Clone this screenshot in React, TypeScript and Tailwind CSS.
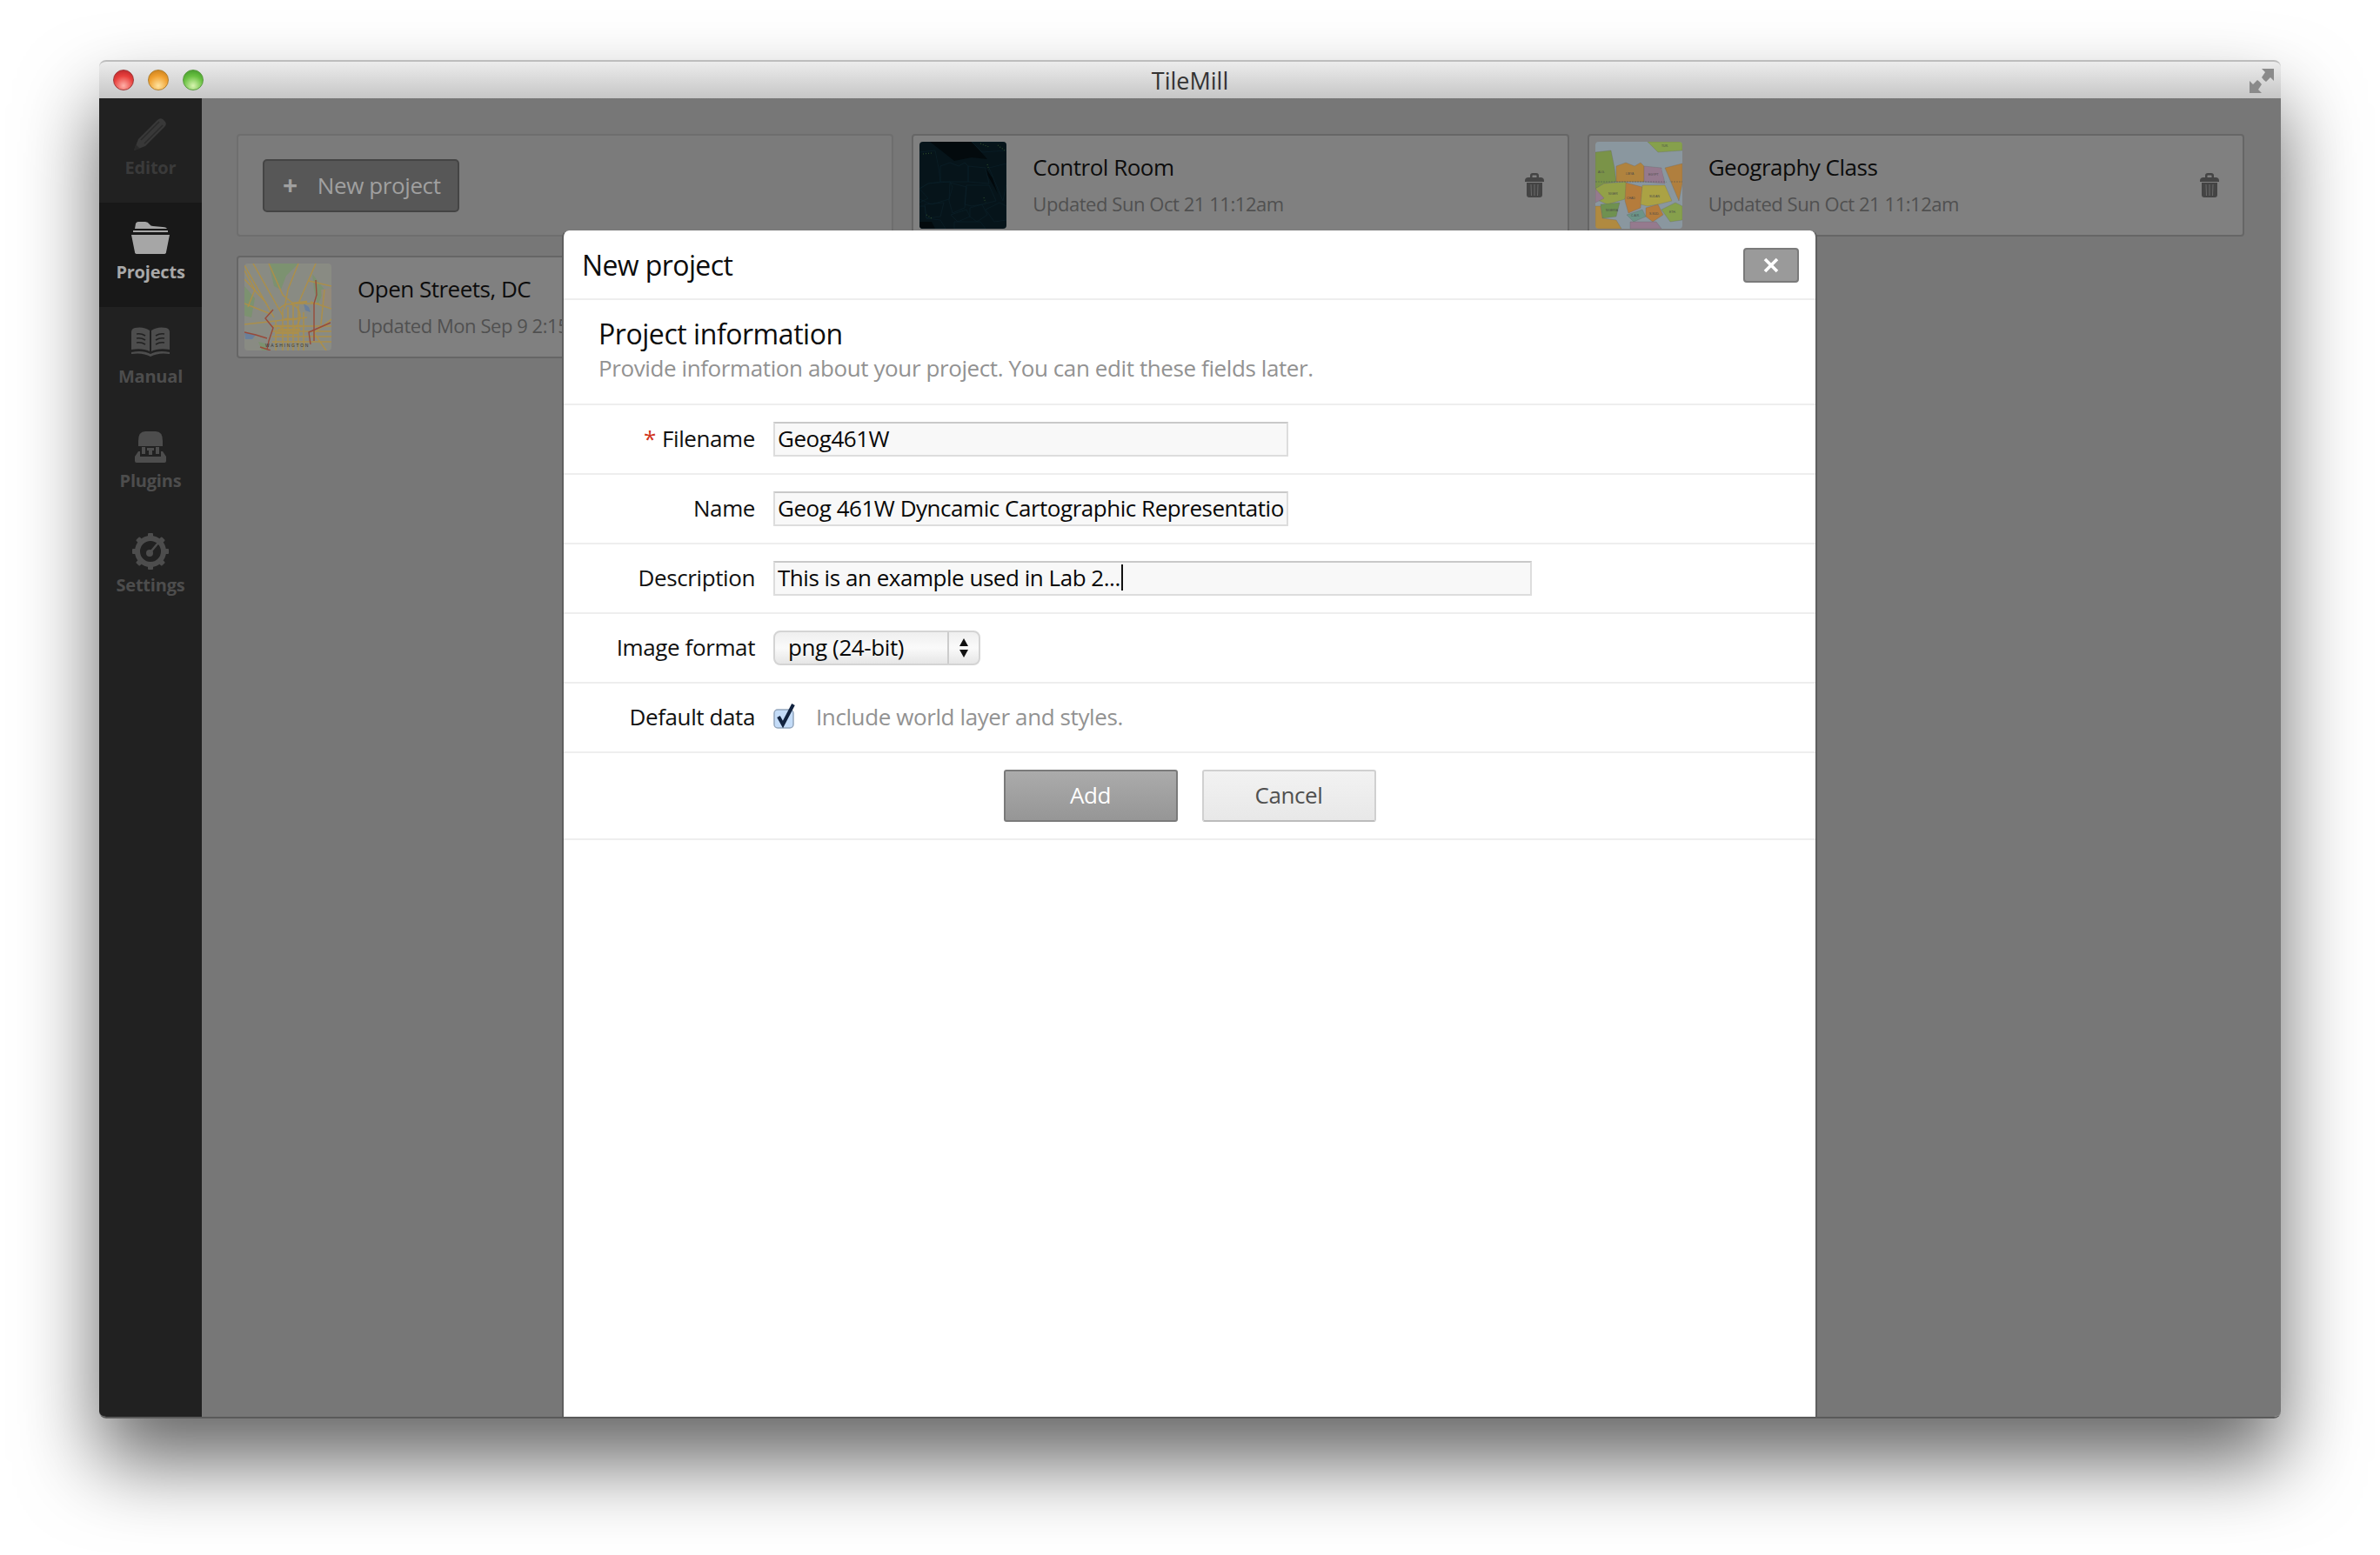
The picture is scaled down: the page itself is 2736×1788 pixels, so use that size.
const fontStack = { fontFamily: '"Open Sans", "Noto Sans", sans-serif' }

function PencilIcon() {
  return (
    <svg width="40" height="40" viewBox="0 0 40 40" fill="#383838">
      <path d="M1 39 L6 26 L28 4 Q31 1 34 3 L37 6 Q39 9 36 12 L14 34 Z" />
      <path d="M1 39 L3 32 L8 37 Z" fill="#2a2a2a" />
      <path d="M9 27 L30 6 M13 31 L34 10" stroke="#2a2a2a" strokeWidth="1.5" />
    </svg>
  )
}

function FolderIcon() {
  return (
    <svg width="44" height="40" viewBox="0 0 44 40" fill="#a6a6a6">
      <path d="M4 9 L5 3 Q6 1 8 1 L16 1 Q19 1 21 4 Q22 6 25 6 L36 7 Q40 7 41 9 Z" />
      <rect x="2" y="11" width="40" height="2" />
      <path d="M0 16 L44 16 L40 36 Q40 38 37 38 L7 38 Q4 38 4 36 Z" />
    </svg>
  )
}

function BookIcon() {
  return (
    <svg width="46" height="40" viewBox="0 0 46 40" fill="#4d4d4d">
      <path d="M1 8 Q1 4 5 3 Q15 1 22 6 L22 30 Q14 26 1 28 Z" />
      <path d="M45 8 Q45 4 41 3 Q31 1 24 6 L24 30 Q32 26 45 28 Z" />
      <path d="M1 31 Q14 28 23 33 Q32 28 45 31 L45 33 Q32 31 23 36 Q14 31 1 33 Z" />
      <path d="M7 10 Q12 9 17 12 M7 15 Q12 14 17 17 M7 20 Q12 19 17 22 M39 10 Q34 9 29 12 M39 15 Q34 14 29 17 M39 20 Q34 19 29 22" stroke="#212121" strokeWidth="1.6" fill="none" />
    </svg>
  )
}

function PluginIcon() {
  return (
    <svg width="38" height="40" viewBox="0 0 38 40" fill="#4d4d4d">
      <path d="M5 13 Q5 2 13 2 L25 2 Q33 2 33 13 L33 19 L5 19 Z" />
      <rect x="9" y="20" width="4" height="8" />
      <rect x="25" y="20" width="4" height="8" />
      <path d="M15 21 L23 21 L23 24 L21 24 L21 29 L17 29 L17 24 L15 24 Z" />
      <path d="M5 25 L7 25 L7 31 L31 31 L31 25 L33 25 L37 31 L37 36 Q37 38 35 38 L3 38 Q1 38 1 36 L1 31 Z" />
    </svg>
  )
}

function GearIcon() {
  return (
    <svg width="42" height="42" viewBox="0 0 42 42" fill="none">
      <circle cx="21" cy="21" r="15" stroke="#4d4d4d" strokeWidth="6" />
      {[0, 45, 90, 135, 180, 225, 270, 315].map((a) => (
        <rect key={a} x="18" y="0" width="6" height="6" rx="1" fill="#4d4d4d" transform={`rotate(${a} 21 21)`} />
      ))}
      <circle cx="20" cy="23" r="4" fill="#4d4d4d" />
      <path d="M20 23 L30 11" stroke="#4d4d4d" strokeWidth="2.5" />
    </svg>
  )
}

function TrashIcon() {
  return (
    <svg width="22" height="28" viewBox="0 0 22 28" fill="#444444">
      <path d="M6 5 L6 3 Q6 0 9 0 L13 0 Q16 0 16 3 L16 5 L13.5 5 L13.5 3 Q13.5 2.5 13 2.5 L9 2.5 Q8.5 2.5 8.5 3 L8.5 5 Z" />
      <path d="M0 9 Q0 5 4 5 L18 5 Q22 5 22 9 L22 10 L0 10 Z" />
      <path d="M2 11 L20 11 L20 25 Q20 28 17 28 L5 28 Q2 28 2 25 Z" />
      <path d="M7 13 L7.5 26 M11 13 L11 26 M15 13 L14.5 26" stroke="#6a6a6a" strokeWidth="1" />
    </svg>
  )
}

function ExpandIcon() {
  return (
    <svg width="28" height="28" viewBox="0 0 28 28" fill="#8a8a8a">
      <path d="M14 0 L28 0 L28 14 L24 10 L19 15 Q16 13 14 10 L18 4 Z" />
      <path d="M0 14 L4 18 L9 13 Q12 15 14 18 L10 24 L14 28 L0 28 Z" />
    </svg>
  )
}

function DcMap() {
  return (
    <svg viewBox="0 0 100 100" className="h-[100px] w-[100px] rounded-[4px]">
      <rect width="100" height="100" fill="#898b83" />
      <path d="M28 0 L62 0 L48 14 L42 30 L34 26 Z" fill="#7c9270" />
      <path d="M78 12 L92 30 L84 48 L80 30 Z" fill="#7c9270" />
      <path d="M0 26 L12 40 L8 62 L0 60 Z" fill="#7c9270" />
      <path d="M88 30 L100 28 L100 50 L90 50 Z" fill="#93897a" />
      <path d="M0 79 L13 82 L9 87 L1 87 Z" fill="#6a7f9a" />
      <path d="M16 90 L24 92 L26 100 L20 100 Z" fill="#7c9270" />
      <path d="M68 46 L74 50 L76 56 L70 54 Z" fill="#6a7f9a" />
      <g stroke="#ab8f4b" strokeWidth="1.5" fill="none">
        <path d="M0 2 L34 62 M10 0 L44 60 M0 18 L24 44 L34 62 M28 0 L44 36 L56 46 L86 46" />
        <path d="M62 0 L50 30 L46 52 M82 0 L62 46 M74 20 L100 26 M76 44 L100 52 M0 46 L30 58" />
        <path d="M0 70 L36 66 L72 62 M36 66 L36 100 M44 52 L44 100 M50 50 L50 100 M56 48 L56 100 M62 48 L62 100 M68 56 L68 100" />
        <path d="M32 72 L100 72 M32 78 L100 78 M32 84 L100 84 M32 90 L100 90 M100 64 L80 80 M80 80 L94 100" />
        <path d="M0 8 L12 30 L4 50 M92 30 L88 70 M40 52 Q50 42 60 50 Q68 60 60 72 Q50 82 40 72" />
      </g>
      <g stroke="#ab8f4b" strokeWidth="2.6" fill="none">
        <path d="M34 72 L66 72 M36 80 L62 80 M38 76 L64 76 M46 64 L60 64 M54 46 L72 44" />
      </g>
      <g stroke="#984a3a" strokeWidth="1.4" fill="none">
        <path d="M82 19 L83 36 L80 46 L80 89" />
        <path d="M99 68 L74 79 L76 93" />
        <path d="M33 53 L24 63 L33 74 L28 89 L26 99" />
        <path d="M0 79 L13 82 L26 86 M18 96 L30 100" />
      </g>
      <text x="24" y="96" fontSize="5" letterSpacing="1.7" fill="#333333" fontFamily="'Liberation Sans', sans-serif">WASHINGTON</text>
    </svg>
  )
}

const worldRegions = [
  { d: "M0 12 L18 10 L22 30 L24 46 L10 48 L0 54 Z", fill: "#7a9348" },
  { d: "M24 28 L35 24 L45 28 L52 24 L56 28 L56 46 L35 46 L24 46 Z", fill: "#b0833e" },
  { d: "M56 28 L76 30 L80 48 L56 46 Z", fill: "#957a8e" },
  { d: "M10 48 L35 46 L38 52 L34 66 L14 72 L0 66 L0 54 Z", fill: "#93a048" },
  { d: "M35 47 L54 52 L52 76 L38 82 L34 68 Z", fill: "#b57c3c" },
  { d: "M54 50 L80 50 L88 68 L72 72 L60 74 L52 72 Z", fill: "#aba244" },
  { d: "M80 30 L100 25 L100 48 L96 68 Z", fill: "#b07f3e" },
  { d: "M6 72 L28 70 L24 86 L8 88 Z", fill: "#6f9150" },
  { d: "M36 84 L54 78 L58 86 L44 92 Z", fill: "#6c9488" },
  { d: "M58 76 L72 72 L78 84 L66 92 L58 86 Z", fill: "#b57c3c" },
  { d: "M76 78 L92 70 L100 74 L100 90 L86 92 Z", fill: "#86a04c" },
  { d: "M40 92 L70 92 L76 100 L40 100 Z", fill: "#957a8e" },
  { d: "M60 0 L100 0 L100 10 L72 12 Z", fill: "#86a04c" },
  { d: "M0 54 L10 65 L0 70 Z", fill: "#957a8e" },
  { d: "M0 74 L6 74 L8 88 L24 90 L30 100 L0 100 Z", fill: "#b08a40" },
]

function WorldMap({ dark }: { dark?: boolean }) {
  // same shapes for both thumbs, the dark one only keeps the borders
  if (dark) {
    return (
      <svg viewBox="0 0 100 100" className="h-[100px] w-[100px] rounded-[4px]">
        <rect width="100" height="100" fill="#06141a" />
        <path d="M12 0 L60 0 L78 20 L60 18 L40 22 L30 14 Z" fill="#030a0d" />
        <path d="M0 92 L14 92 L18 100 L0 100 Z" fill="#030a0d" />
        <path d="M76 30 L84 42 L90 60 L86 52 L78 38 Z" fill="#02080b" />
        {worldRegions.map((r) => (
          <path key={r.d} d={r.d} fill="none" stroke="#0b222c" strokeWidth="0.6" />
        ))}
        <path d="M4 14 L14 13 M70 2 L80 6 M78 26 L80 32 M74 64 L76 70 M8 84 L14 88 M90 4 L98 10" stroke="#2b4a2a" strokeWidth="1.2" strokeDasharray="1 2" />
      </svg>
    )
  }
  return (
    <svg viewBox="0 0 100 100" className="h-[100px] w-[100px] rounded-[4px]">
      <rect width="100" height="100" fill="#8a979f" />
      {worldRegions.map((r) => (
        <path key={r.d} d={r.d} fill={r.fill} stroke="#5c5c5c" strokeWidth="0.25" />
      ))}
      <path d="M0 46 L100 46" stroke="#44505a" strokeWidth="0.5" strokeDasharray="2 1" fill="none" />
      <path d="M76 30 L84 42 L96 70 L90 64 L78 38 Z" fill="#8a979f" />
      <g fontSize="3.4" fill="#4a4a4a" fontFamily="'Liberation Sans', sans-serif">
        <text x="3" y="36">ALG.</text>
        <text x="35" y="38">LIBYA</text>
        <text x="61" y="39">EGYPT</text>
        <text x="15" y="61">NIGER</text>
        <text x="36" y="66">CHAD</text>
        <text x="62" y="64">SUDAN</text>
        <text x="12" y="80">NIGERIA</text>
        <text x="41" y="86">C.A.R.</text>
        <text x="62" y="84">S.SUD.</text>
        <text x="85" y="82">ETH.</text>
        <text x="76" y="6">TUR.</text>
      </g>
    </svg>
  )
}

function ProjectCard({
  title,
  updated,
  thumb,
  trash,
}: {
  title: string
  updated: string
  thumb: React.ReactNode
  trash?: boolean
}) {
  return (
    <div className="flex h-[118px] items-center overflow-hidden rounded-[4px] border-2 border-[#666666] bg-[#808080] pl-[7px] pr-[27px]">
      <div className="shrink-0">{thumb}</div>
      <div className="ml-[30px] min-w-0 flex-1 whitespace-nowrap pb-[3px]">
        <div className="text-[26px] leading-[36px] tracking-[-0.5px] text-[#0c0c0c]">{title}</div>
        <div className="mt-[9px] text-[22px] leading-[30px] tracking-[-0.45px] text-[#505050]">{updated}</div>
      </div>
      {trash && <TrashIcon />}
    </div>
  )
}

function FormRow({ label, required, children }: { label: string; required?: boolean; children: React.ReactNode }) {
  return (
    <div className="flex h-[80px] items-center border-b-2 border-[#eeeeee]">
      <div className="w-[220px] shrink-0 pb-[2px] text-right text-[26px] leading-[36px] tracking-[-0.4px] text-[#111111]">
        {required && <span className="mr-[7px] text-[#d0341c]">*</span>}
        {label}
      </div>
      <div className="ml-[21px] flex items-center">{children}</div>
    </div>
  )
}

function TextField({ value, width, caret }: { value: string; width: string; caret?: boolean }) {
  return (
    <div className={`flex h-[40px] items-center overflow-hidden whitespace-nowrap border-2 border-[#dddddd] border-t-[#c9c9c9] bg-[#f8f8f8] pb-[2px] pl-[3px] text-[26px] tracking-[-0.47px] text-[#080808] ${width}`}>
      {value}
      {caret && <span className="ml-[1px] h-[30px] w-[2px] shrink-0 bg-[#111111]" />}
    </div>
  )
}

const navItems = [
  { label: "Editor", icon: <PencilIcon />, className: "text-[#3a3a3a]" },
  { label: "Projects", icon: <FolderIcon />, className: "bg-[#181818] text-[#a8a8a8]" },
  { label: "Manual", icon: <BookIcon />, className: "text-[#4d4d4d]" },
  { label: "Plugins", icon: <PluginIcon />, className: "text-[#4d4d4d]" },
  { label: "Settings", icon: <GearIcon />, className: "text-[#4d4d4d]" },
]

export default function App() {
  return (
    <div className="h-[1788px] w-[2736px] overflow-hidden bg-white pl-[114px] pt-[69px]" style={fontStack}>
      <div className="flex h-[1562px] w-[2508px] flex-col rounded-[8px] shadow-[0_50px_90px_rgba(0,0,0,0.6)]">
        {/* Title bar */}
        <div className="relative flex h-[44px] shrink-0 items-center justify-center rounded-t-[8px] border-t-2 border-[#bdbdbd] bg-linear-to-b from-[#ececec] to-[#c6c6c6]">
          <div className="absolute left-[16px] top-[9px] flex gap-[16px]">
            <span className="h-[24px] w-[24px] rounded-full border border-[#a03a3a] bg-[radial-gradient(circle_at_50%_80%,#ffb0a8,#e8403c_55%,#b02028)]" />
            <span className="h-[24px] w-[24px] rounded-full border border-[#b08030] bg-[radial-gradient(circle_at_50%_80%,#ffe4a0,#f0a030_55%,#c07818)]" />
            <span className="h-[24px] w-[24px] rounded-full border border-[#5a9a40] bg-[radial-gradient(circle_at_50%_80%,#d8f4b0,#68c040_55%,#3c9028)]" />
          </div>
          <span className="text-[27px] leading-none text-[#333333]">TileMill</span>
          <div className="absolute right-[8px] top-[8px]">
            <ExpandIcon />
          </div>
        </div>

        <div className="relative flex min-h-0 flex-1 overflow-hidden rounded-b-[8px] border-b-2 border-[#5a5a5a]">
          {/* Sidebar */}
          <nav className="w-[118px] shrink-0 bg-[#212121]">
            {navItems.map((item) => (
              <div key={item.label} className={`flex h-[120px] flex-col items-center pt-[20px] ${item.className}`}>
                <div className="flex h-[42px] items-center justify-center">{item.icon}</div>
                <div className="mt-[6px] text-[20px] font-bold leading-[24px] tracking-[-0.2px]">{item.label}</div>
              </div>
            ))}
          </nav>

          {/* Project list */}
          <main className="grid flex-1 auto-rows-[118px] grid-cols-3 gap-x-[21px] gap-y-[22px] bg-[#777777] pl-[40px] pr-[42px] pt-[41px]">
            <div className="flex items-center rounded-[4px] border-2 border-[#6e6e6e] bg-[#7b7b7b] pl-[28px]">
              <div className="flex h-[61px] w-[226px] items-center rounded-[5px] border-2 border-[#444444] bg-[#575757] pl-[21px] text-[26px] tracking-[-0.4px] text-[#a0a0a0]">
                <span className="mr-[23px] text-[30px] font-bold leading-none">+</span>
                New project
              </div>
            </div>
            <ProjectCard title="Control Room" updated="Updated Sun Oct 21 11:12am" thumb={<WorldMap dark />} trash />
            <ProjectCard title="Geography Class" updated="Updated Sun Oct 21 11:12am" thumb={<WorldMap />} trash />
            <ProjectCard title="Open Streets, DC" updated="Updated Mon Sep 9 2:15pm" thumb={<DcMap />} />
          </main>

          {/* Modal */}
          <div className="absolute bottom-0 left-[532px] top-[152px] w-[1443px] rounded-t-[8px] border-x-2 border-[#5e5e5e] bg-white">
            <div className="flex h-[80px] items-center justify-between border-b-2 border-[#eeeeee] pl-[21px] pr-[19px] pt-[2px]">
              <h1 className="text-[32px] leading-none tracking-[-0.6px] text-[#0c0c0c]">New project</h1>
              <button className="flex h-[40px] w-[64px] items-center justify-center rounded-[4px] border-2 border-[#7a7a7a] bg-[#9a9a9a]">
                <svg width="18" height="18" viewBox="0 0 18 18">
                  <path d="M2 2 L16 16 M16 2 L2 16" stroke="white" strokeWidth="3.6" />
                </svg>
              </button>
            </div>

            <div className="flex h-[121px] flex-col justify-center border-b-2 border-[#eeeeee] pb-[6px] pl-[40px]">
              <h2 className="text-[32px] leading-[42px] tracking-[-0.45px] text-[#0c0c0c]">Project information</h2>
              <p className="text-[26px] leading-[36px] tracking-[-0.4px] text-[#929292]">Provide information about your project. You can edit these fields later.</p>
            </div>

            <FormRow label="Filename" required>
              <TextField value="Geog461W" width="w-[592px]" />
            </FormRow>
            <FormRow label="Name">
              <TextField value="Geog 461W Dyncamic Cartographic Representatio" width="w-[592px]" />
            </FormRow>
            <FormRow label="Description">
              <TextField value="This is an example used in Lab 2..." width="w-[872px]" caret />
            </FormRow>
            <FormRow label="Image format">
              <div className="flex h-[40px] w-[238px] items-center rounded-[8px] border-2 border-[#d4d4d4] bg-linear-to-b from-[#efefef] via-[#fafafa] to-[#e6e6e6] text-[26px] tracking-[-0.4px] text-[#080808]">
                <span className="flex-1 pb-[2px] pl-[15px]">png (24-bit)</span>
                <span className="flex h-full w-[36px] items-center justify-center border-l-2 border-[#cccccc]">
                  <svg width="12" height="24" viewBox="0 0 12 24" fill="#111111">
                    <path d="M6 1 L11 10 L1 10 Z M6 23 L11 14 L1 14 Z" />
                  </svg>
                </span>
              </div>
            </FormRow>
            <FormRow label="Default data">
              <svg width="26" height="30" viewBox="0 0 26 30" className="-mt-[4px]">
                <rect x="1" y="8" width="22" height="21" rx="4" fill="#c4dcf8" stroke="#93a6bd" strokeWidth="1.5" />
                <path d="M6 16 L11 25 L23 2" fill="none" stroke="#12233f" strokeWidth="4" />
              </svg>
              <span className="ml-[23px] pb-[2px] text-[26px] tracking-[-0.4px] text-[#929292]">Include world layer and styles.</span>
            </FormRow>

            <div className="flex h-[100px] items-center justify-center gap-[28px] border-b-2 border-[#eeeeee]">
              <button className="h-[60px] w-[200px] rounded-[3px] border-2 border-[#7a7a7a] bg-linear-to-b from-[#ababab] to-[#969696] pb-[2px] text-[26px] tracking-[-0.4px] text-white">
                Add
              </button>
              <button className="h-[60px] w-[200px] rounded-[3px] border-2 border-[#d0d0d0] border-b-[#bcbcbc] bg-linear-to-b from-[#f2f2f2] to-[#e8e8e8] pb-[2px] text-[26px] tracking-[-0.4px] text-[#505050]">
                Cancel
              </button>
            </div>
          </div>
        </div>
      </div>
    </div>
  )
}
